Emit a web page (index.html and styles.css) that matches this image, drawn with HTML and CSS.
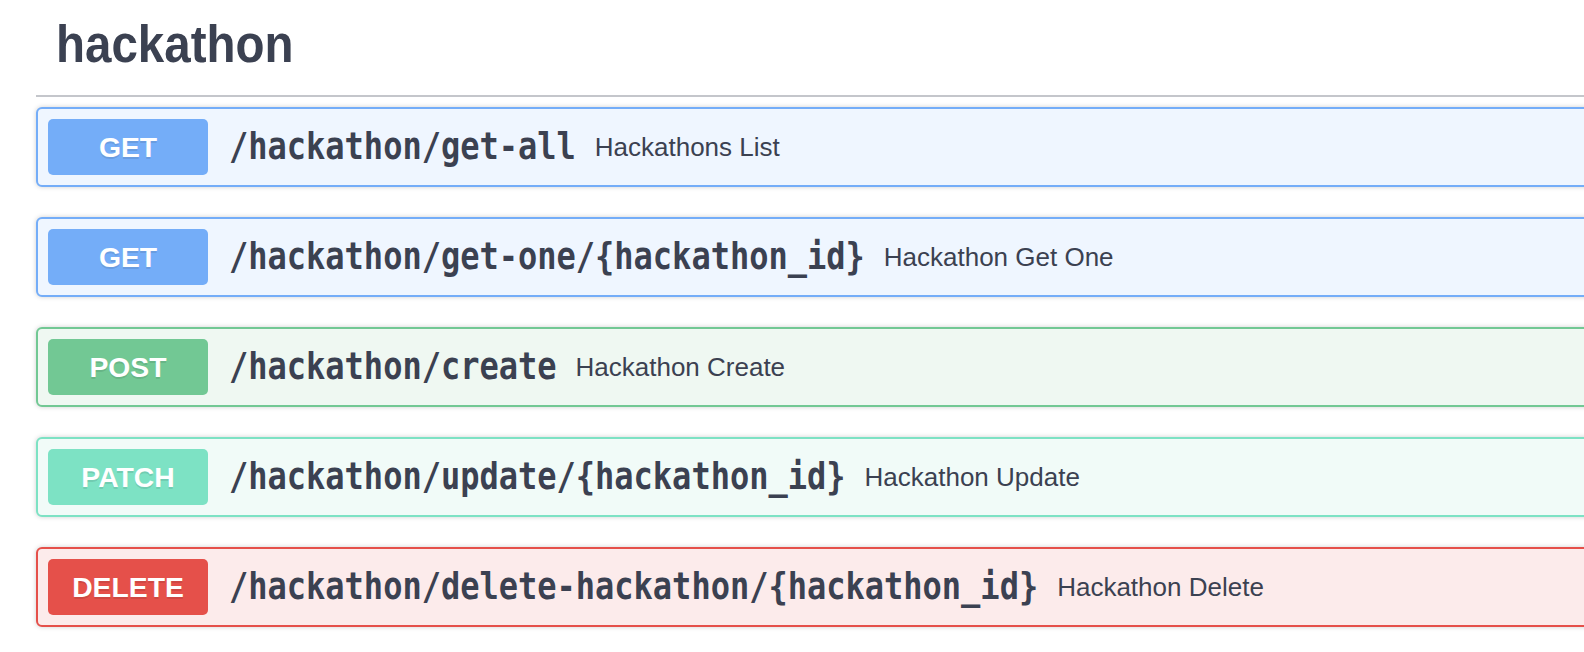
FILE: index.html
```html
<!DOCTYPE html>
<html lang="en">
<head>
<meta charset="utf-8">
<title>hackathon</title>
<link rel="stylesheet" href="styles.css">
</head>
<body>
<div class="page">
  <h3 class="tag"><span class="tag-name">hackathon</span></h3>
  <div class="ops">
    <div class="op op-get">
      <span class="method">GET</span>
      <span class="path">/hackathon/get-all</span>
      <span class="desc">Hackathons List</span>
    </div>
    <div class="op op-get">
      <span class="method">GET</span>
      <span class="path">/hackathon/get-one/{hackathon_id}</span>
      <span class="desc">Hackathon Get One</span>
    </div>
    <div class="op op-post">
      <span class="method">POST</span>
      <span class="path">/hackathon/create</span>
      <span class="desc">Hackathon Create</span>
    </div>
    <div class="op op-patch">
      <span class="method">PATCH</span>
      <span class="path">/hackathon/update/{hackathon_id}</span>
      <span class="desc">Hackathon Update</span>
    </div>
    <div class="op op-delete">
      <span class="method">DELETE</span>
      <span class="path">/hackathon/delete-hackathon/{hackathon_id}</span>
      <span class="desc">Hackathon Delete</span>
    </div>
  </div>
</div>
</body>
</html>
```

FILE: styles.css
```css
html, body {
  margin: 0;
  padding: 0;
  overflow: hidden;
  background: #ffffff;
}

.page {
  padding-left: 36px;
  width: 1600px;
  color: #3b4151;
}

.tag {
  margin: 0;
  padding: 22px 0 25px 20px;
  font-family: "Liberation Sans", Arial, sans-serif;
  font-weight: 700;
  font-size: 47.5px;
  line-height: 48px;
  border-bottom: 2px solid #c4c6cb;
}

.tag-name {
  display: inline-block;
  transform-origin: 0 40.5px;
  transform: scaleY(1.1);
}

.ops {
  padding-top: 10px;
}

.op {
  display: flex;
  align-items: center;
  padding: 10px;
  margin-bottom: 30px;
  border: 2px solid;
  border-radius: 6px;
  box-shadow: 0 0 5px rgba(0, 0, 0, 0.19);
}

.method {
  flex: none;
  width: 160px;
  height: 56px;
  border-radius: 5px;
  display: flex;
  align-items: center;
  justify-content: center;
  font-family: "Liberation Sans", Arial, sans-serif;
  font-weight: 700;
  font-size: 28.3px;
  line-height: 28.3px;
  color: #ffffff;
  text-shadow: 0 2px 0 rgba(0, 0, 0, 0.1);
}

.path {
  display: inline-block;
  margin-left: 21px;
  font-family: "DejaVu Sans Mono", "Liberation Mono", monospace;
  font-weight: 700;
  font-size: 32px;
  line-height: 32px;
  color: #3b4151;
  white-space: nowrap;
  transform-origin: 0 27px;
  transform: translateY(1px) scaleY(1.14);
}

.desc {
  margin-left: 19px;
  font-family: "Liberation Sans", Arial, sans-serif;
  font-size: 26px;
  line-height: 26px;
  color: #3b4151;
  white-space: nowrap;
}

.op-get {
  border-color: #74adf8;
  background: #eff6ff;
}
.op-get .method {
  background: #74adf8;
}

.op-post {
  border-color: #72c894;
  background: #eff8f2;
}
.op-post .method {
  background: #72c894;
}

.op-patch {
  border-color: #7de2c4;
  background: #f1fbf8;
}
.op-patch .method {
  background: #7de2c4;
}

.op-delete {
  border-color: #e5504a;
  background: #fcebeb;
}
.op-delete .method {
  background: #e5504a;
}
```
